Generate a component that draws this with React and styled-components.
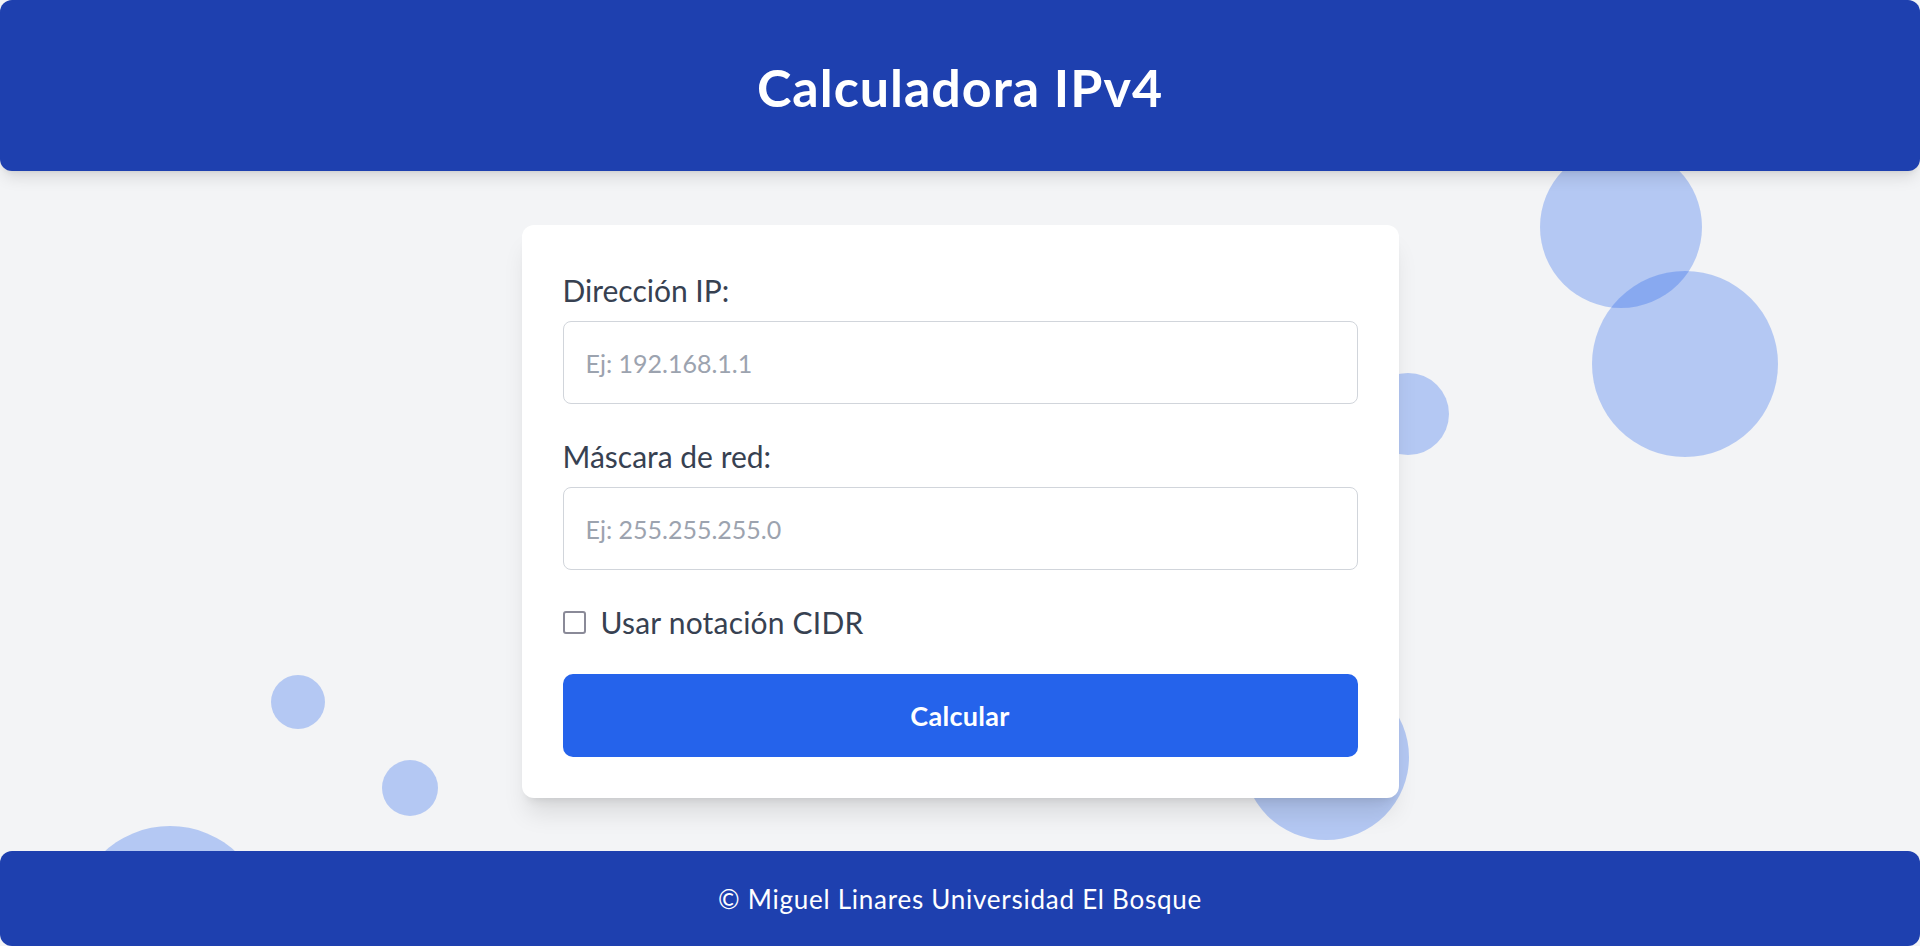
import { useState } from "react";
import styled, { createGlobalStyle } from "styled-components";

const bubbles = [
    { x: 1540, y: 146, size: 162 },
    { x: 1592, y: 271, size: 186 },
    { x: 1367, y: 373, size: 82 },
    { x: 271, y: 675, size: 54 },
    { x: 382, y: 760, size: 56 },
    { x: 73, y: 826, size: 194 },
    { x: 1243, y: 674, size: 166 },
];

export default function App() {
    const [ip, setIp] = useState("");
    const [mask, setMask] = useState("");
    const [cidr, setCidr] = useState(false);

    return (
        <>
            <GlobalStyle />
            <Page>
                {bubbles.map((b, i) => (
                    <Bubble key={i} $x={b.x} $y={b.y} $size={b.size} />
                ))}
                <Header>
                    <Title>Calculadora IPv4</Title>
                </Header>
                <Main>
                    <Card>
                        <Field>
                            <Label htmlFor="ip">Dirección IP:</Label>
                            <Input id="ip" placeholder="Ej: 192.168.1.1" value={ip} onChange={e => setIp(e.target.value)} />
                        </Field>
                        <Field>
                            <Label htmlFor="mask">Máscara de red:</Label>
                            <Input id="mask" placeholder="Ej: 255.255.255.0" value={mask} onChange={e => setMask(e.target.value)} />
                        </Field>
                        <CheckRow>
                            <CheckBox type="checkbox" checked={cidr} onChange={e => setCidr(e.target.checked)} />
                            Usar notación CIDR
                        </CheckRow>
                        <Button type="button">Calcular</Button>
                    </Card>
                </Main>
                <Footer>© Miguel Linares Universidad El Bosque</Footer>
            </Page>
        </>
    );
}

const GlobalStyle = createGlobalStyle`
    * {
        box-sizing: border-box;
    }
    body {
        margin: 0;
        background: #f3f4f6;
        font-family: Lato, "Open Sans", sans-serif;
    }
`;

const Page = styled.div`
    position: relative;
    min-height: 100vh;
    display: flex;
    flex-direction: column;
    overflow: hidden;
`;

const Bubble = styled.div`
    position: absolute;
    left: ${props => props.$x}px;
    top: ${props => props.$y}px;
    width: ${props => props.$size}px;
    height: ${props => props.$size}px;
    border-radius: 50%;
    background: rgba(37, 99, 235, 0.3);
    z-index: 0;
`;

const Header = styled.header`
    position: relative;
    z-index: 2;
    height: 171px;
    padding-top: 4px;
    background: #1e40af;
    border-radius: 12px;
    box-shadow: 0 10px 15px -3px rgba(0, 0, 0, 0.1), 0 4px 6px -4px rgba(0, 0, 0, 0.1);
    display: flex;
    align-items: center;
    justify-content: center;
`;

const Title = styled.h1`
    margin: 0;
    color: #fff;
    font-size: 52px;
    font-weight: 700;
    letter-spacing: 1px;
    line-height: 1.2;
`;

const Main = styled.main`
    flex: 1;
    display: flex;
    justify-content: center;
    align-items: flex-start;
    padding-top: 54px;
`;

const Card = styled.div`
    position: relative;
    z-index: 1;
    width: 877px;
    padding: 43px 41px 41px;
    background: #fff;
    border-radius: 12px;
    box-shadow: 0 20px 25px -5px rgba(0, 0, 0, 0.1), 0 8px 10px -6px rgba(0, 0, 0, 0.1);
    display: flex;
    flex-direction: column;
`;

const Field = styled.div`
    display: flex;
    flex-direction: column;
    gap: 8px;
    margin-bottom: 30px;
`;

const Label = styled.label`
    color: #374151;
    font-size: 30px;
    line-height: 45px;
`;

const Input = styled.input`
    height: 83px;
    padding: 0 22px;
    border: 1px solid #d1d5db;
    border-radius: 8px;
    font-family: inherit;
    font-size: 25px;
    color: #374151;
    outline: none;

    &::placeholder {
        color: #9ca3af;
    }
`;

const CheckRow = styled.label`
    display: flex;
    align-items: center;
    gap: 15px;
    color: #374151;
    font-size: 30px;
    line-height: 45px;
    letter-spacing: 0.2px;
`;

const CheckBox = styled.input`
    appearance: none;
    margin: 0;
    width: 23px;
    height: 23px;
    border: 2px solid #8a8a98;
    border-radius: 3px;
    background: #fff;

    &:checked {
        background: #2563eb;
        border-color: #2563eb;
    }
`;

const Button = styled.button`
    margin-top: 29px;
    height: 83px;
    border: none;
    border-radius: 10px;
    background: #2563eb;
    color: #fff;
    font-family: inherit;
    font-size: 27px;
    font-weight: 700;
    letter-spacing: 0.3px;
    cursor: pointer;
`;

const Footer = styled.footer`
    position: relative;
    z-index: 2;
    height: 95px;
    background: #1e40af;
    border-radius: 12px;
    color: #fff;
    font-size: 26px;
    letter-spacing: 0.75px;
    display: flex;
    align-items: center;
    justify-content: center;
`;
